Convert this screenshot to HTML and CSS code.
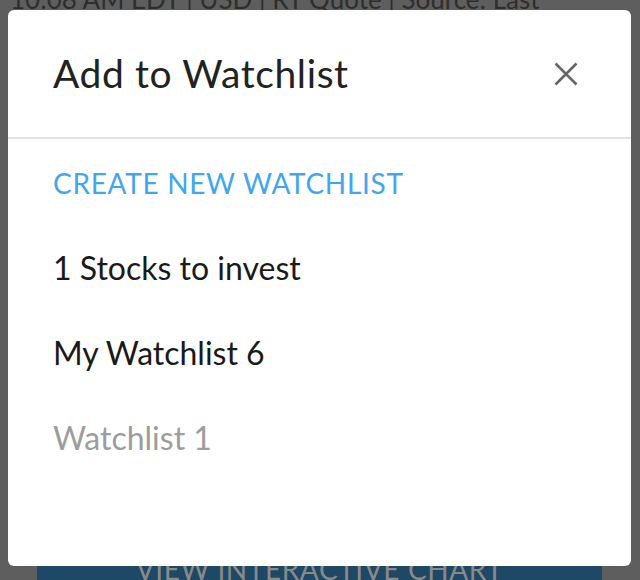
FILE: index.html
```html
<!DOCTYPE html>
<html lang="en">
<head>
    <meta charset="UTF-8">
    <meta name="viewport" content="width=device-width, initial-scale=1.0">
    <title>Add to Watchlist</title>
    <link rel="stylesheet" href="styles.css">
</head>
<body>
    <div class="page">
        <p class="quote-meta">10:08 AM EDT | USD | RT Quote | Source: Last</p>
        <button class="chart-button">VIEW INTERACTIVE CHART</button>
    </div>

    <div class="modal">
        <div class="modal-header">
            <h2 class="modal-title">Add to Watchlist</h2>
            <button class="modal-close" aria-label="Close">
                <svg width="24" height="24" viewBox="0 0 24 24">
                    <path d="M1.5 1.5 L22.5 22.5 M22.5 1.5 L1.5 22.5" stroke="#666" stroke-width="2.6" fill="none"/>
                </svg>
            </button>
        </div>
        <ul class="watchlists">
            <li class="watchlist-item create">CREATE NEW WATCHLIST</li>
            <li class="watchlist-item">1 Stocks to invest</li>
            <li class="watchlist-item">My Watchlist 6</li>
            <li class="watchlist-item disabled">Watchlist 1</li>
        </ul>
    </div>
</body>
</html>
```

FILE: styles.css
```css
body {
    margin: 0;
    padding: 0;
    font-family: 'Lato', 'Open Sans', sans-serif;
    background: #5e5e5e;
    height: 580px;
    overflow: hidden;
}
.page {
    display: flex;
    flex-direction: column;
    justify-content: space-between;
    height: 580px;
}
.quote-meta {
    margin: -14px 0 0 10px;
    font-size: 26px;
    color: #2e2e2e;
    line-height: 1;
}
.chart-button {
    margin: 0 38px -14px 37px;
    height: 40px;
    background: #1d4866;
    border: none;
    color: #8a8a8a;
    font-family: inherit;
    font-size: 28px;
    letter-spacing: 0.6px;
    line-height: 1;
    padding-bottom: 12px;
}
.modal {
    position: fixed;
    left: 8px;
    top: 10px;
    width: 623px;
    height: 556px;
    background: white;
    border-radius: 6px;
}
.modal-header {
    display: flex;
    align-items: center;
    justify-content: space-between;
    height: 127px;
    padding: 0 53px 0 45px;
    border-bottom: 2px solid #e2e2e2;
}
.modal-title {
    margin: 0;
    font-size: 39px;
    font-weight: normal;
    letter-spacing: 0.6px;
    color: #222;
    line-height: 1;
}
.modal-close {
    background: none;
    border: none;
    padding: 0;
    display: flex;
}
.watchlists {
    list-style: none;
    margin: 0;
    padding: 1px 0 0 0;
}
.watchlist-item {
    display: flex;
    align-items: center;
    height: 85px;
    padding-left: 45px;
    font-size: 32px;
    color: #1a1a1a;
}
.watchlist-item.create {
    font-size: 28px;
    letter-spacing: 0.7px;
    color: #42a6ef;
}
.watchlist-item.disabled {
    color: #9d9d9d;
}
```
